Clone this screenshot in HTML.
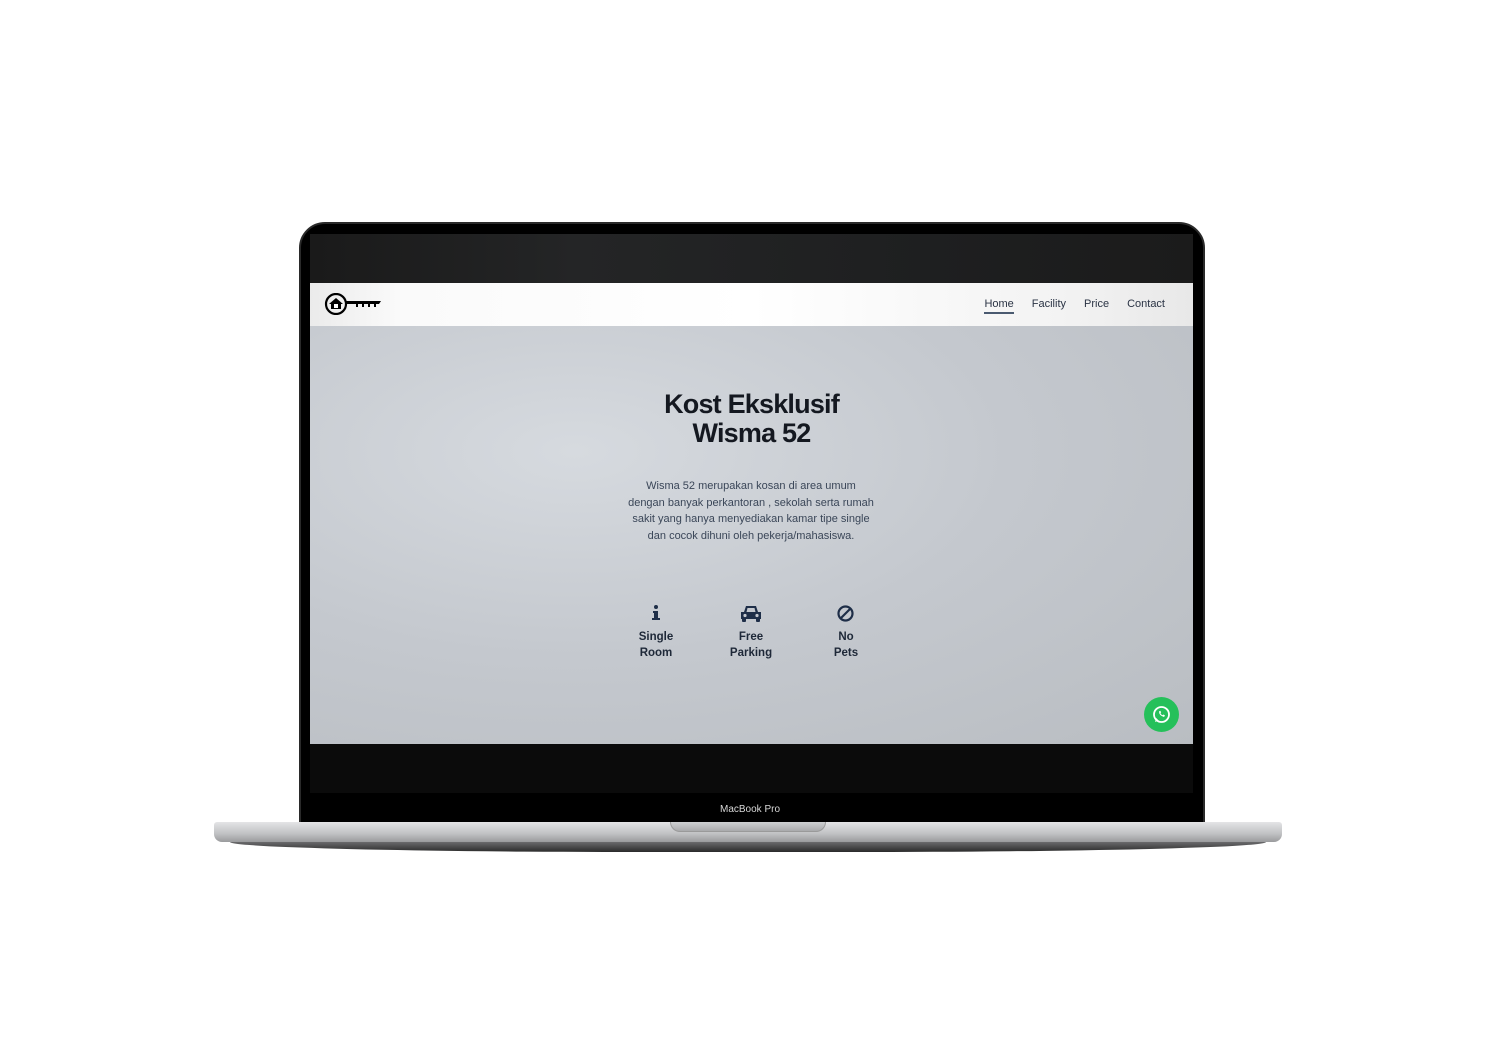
<!DOCTYPE html>
<html><head><meta charset="utf-8"><style>
*{margin:0;padding:0;box-sizing:border-box}
body{width:1500px;height:1038px;background:#fff;position:relative;overflow:hidden;font-family:"Liberation Sans",sans-serif}
.bezel{position:absolute;left:299px;top:222px;width:906px;height:606px;background:#000;border-radius:26px 26px 6px 6px;border:2px solid #2a2a2a}
.top{position:absolute;left:310px;top:234px;width:883px;height:49px;background:linear-gradient(90deg,#1a1a1a,#242526 30%,#1e1f20 70%,#1b1b1b)}
.nav{position:absolute;left:310px;top:283px;width:883px;height:43px;background:linear-gradient(90deg,#ebebeb,#fafafa 10%,#fff 50%,#f3f3f3 85%,#e8e8e8)}
.hero{position:absolute;left:310px;top:326px;width:883px;height:418px;background:radial-gradient(ellipse at 30% 30%,#d6dadf,#c4c8ce 50%,#b9bdc2 100%)}
.bottom{position:absolute;left:310px;top:744px;width:883px;height:49px;background:#0b0b0b}
.links{position:absolute;right:28px;top:15px;font-size:11px;color:#2a3344;display:flex;gap:18px}
.links span:first-child{border-bottom:2px solid #4a5a70;padding-bottom:2px}
h1{position:absolute;left:0;width:883px;top:64px;text-align:center;font-size:27px;line-height:29px;color:#141820;font-weight:bold;letter-spacing:-0.8px}
p{position:absolute;left:291px;width:300px;top:152px;text-align:center;font-size:11px;line-height:16.5px;color:#3a4658}
.f{position:absolute;top:303px;width:60px;text-align:center;font-size:11.5px;line-height:16px;color:#1e2838;font-weight:bold}
.wa{position:absolute;left:834px;top:371px;width:35px;height:35px;border-radius:50%;background:#25c05a}
.label{position:absolute;left:0;width:1500px;top:804px;text-align:center;color:#d8d8d8;font-size:10px}
.base{position:absolute;left:214px;top:822px;width:1068px;height:20px;background:linear-gradient(#e4e4e6,#bfc0c2 60%,#9a9b9d);border-radius:3px 3px 8px 8px}
.base2{position:absolute;left:230px;top:842px;width:1036px;height:10px;background:linear-gradient(#6a6a6c,#2a2a2a);border-radius:0 0 40% 40%/0 0 100% 100%}
.notch{position:absolute;left:670px;top:822px;width:156px;height:10px;background:linear-gradient(#cfd0d2,#a9aaac);border-radius:0 0 10px 10px;border:1px solid #9a9a9a;border-top:none}
</style></head><body>
<div class="bezel"></div>
<div class="top"></div>
<div class="nav">
<svg style="position:absolute;left:13px;top:10px" width="58" height="22" viewBox="0 0 58 22">
<circle cx="13" cy="11" r="10" fill="none" stroke="#000" stroke-width="2.2"/>
<path d="M6 11 L13 5 L20 11 L18 11 L18 16 L8 16 L8 11Z" fill="#000"/>
<rect x="11" y="11" width="4" height="4" fill="#fff"/>
<path d="M23 8 H58 L56 11 H23Z" fill="#000"/>
<path d="M34 11v3M40 11v3M46 11v3M52 11v3" stroke="#000" stroke-width="2"/>
</svg>
<div class="links"><span>Home</span><span>Facility</span><span>Price</span><span>Contact</span></div>
</div>
<div class="hero">
<h1>Kost Eksklusif<br>Wisma 52</h1>
<p>Wisma 52 merupakan kosan di area umum<br>dengan banyak perkantoran , sekolah serta rumah<br>sakit yang hanya menyediakan kamar tipe single<br>dan cocok dihuni oleh pekerja/mahasiswa.</p>
<svg style="position:absolute;left:342px;top:279px" width="8" height="15" viewBox="0 0 8 15"><circle cx="4" cy="2" r="2" fill="#1e2e48"/><path d="M1 6h5v7h2v2H0v-2h2V8H1z" fill="#1e2e48"/></svg>
<svg style="position:absolute;left:430px;top:279px" width="22" height="17" viewBox="0 0 22 17"><path d="M4 7 L6 1 H16 L18 7 H21 V14 H1 V7Z" fill="#1e2e48"/><path d="M6.5 7 L7.5 3 H14.5 L15.5 7Z" fill="#c4c8ce"/><circle cx="5" cy="10.5" r="1.6" fill="#c4c8ce"/><circle cx="17" cy="10.5" r="1.6" fill="#c4c8ce"/><rect x="2" y="13" width="4" height="4" rx="1" fill="#1e2e48"/><rect x="16" y="13" width="4" height="4" rx="1" fill="#1e2e48"/></svg>
<svg style="position:absolute;left:527px;top:279px" width="17" height="17" viewBox="0 0 17 17"><circle cx="8.5" cy="8.5" r="7" fill="none" stroke="#1e2e48" stroke-width="2.2"/><path d="M13 4 L4 13" stroke="#1e2e48" stroke-width="2.2"/></svg>
<div class="f" style="left:316px">Single<br>Room</div>
<div class="f" style="left:411px">Free<br>Parking</div>
<div class="f" style="left:506px">No<br>Pets</div>
<div class="wa"><svg width="35" height="35" viewBox="0 0 35 35"><circle cx="17.5" cy="17.5" r="7.5" fill="none" stroke="#fff" stroke-width="1.8"/><path d="M11 25 L12.3 21 L14.5 23.5Z" fill="#fff"/><path d="M15 14.5 q0 4 5 5.5 l1-1.5 -1.6-1 -0.8 0.8 q-1.6-0.8-2.2-2.2 l0.8-0.8 -1-1.6z" fill="#fff"/></svg></div>
</div>
<div class="bottom"></div>
<div class="label">MacBook Pro</div>
<div class="base2"></div>
<div class="base"></div>
<div class="notch"></div>
</body></html>
